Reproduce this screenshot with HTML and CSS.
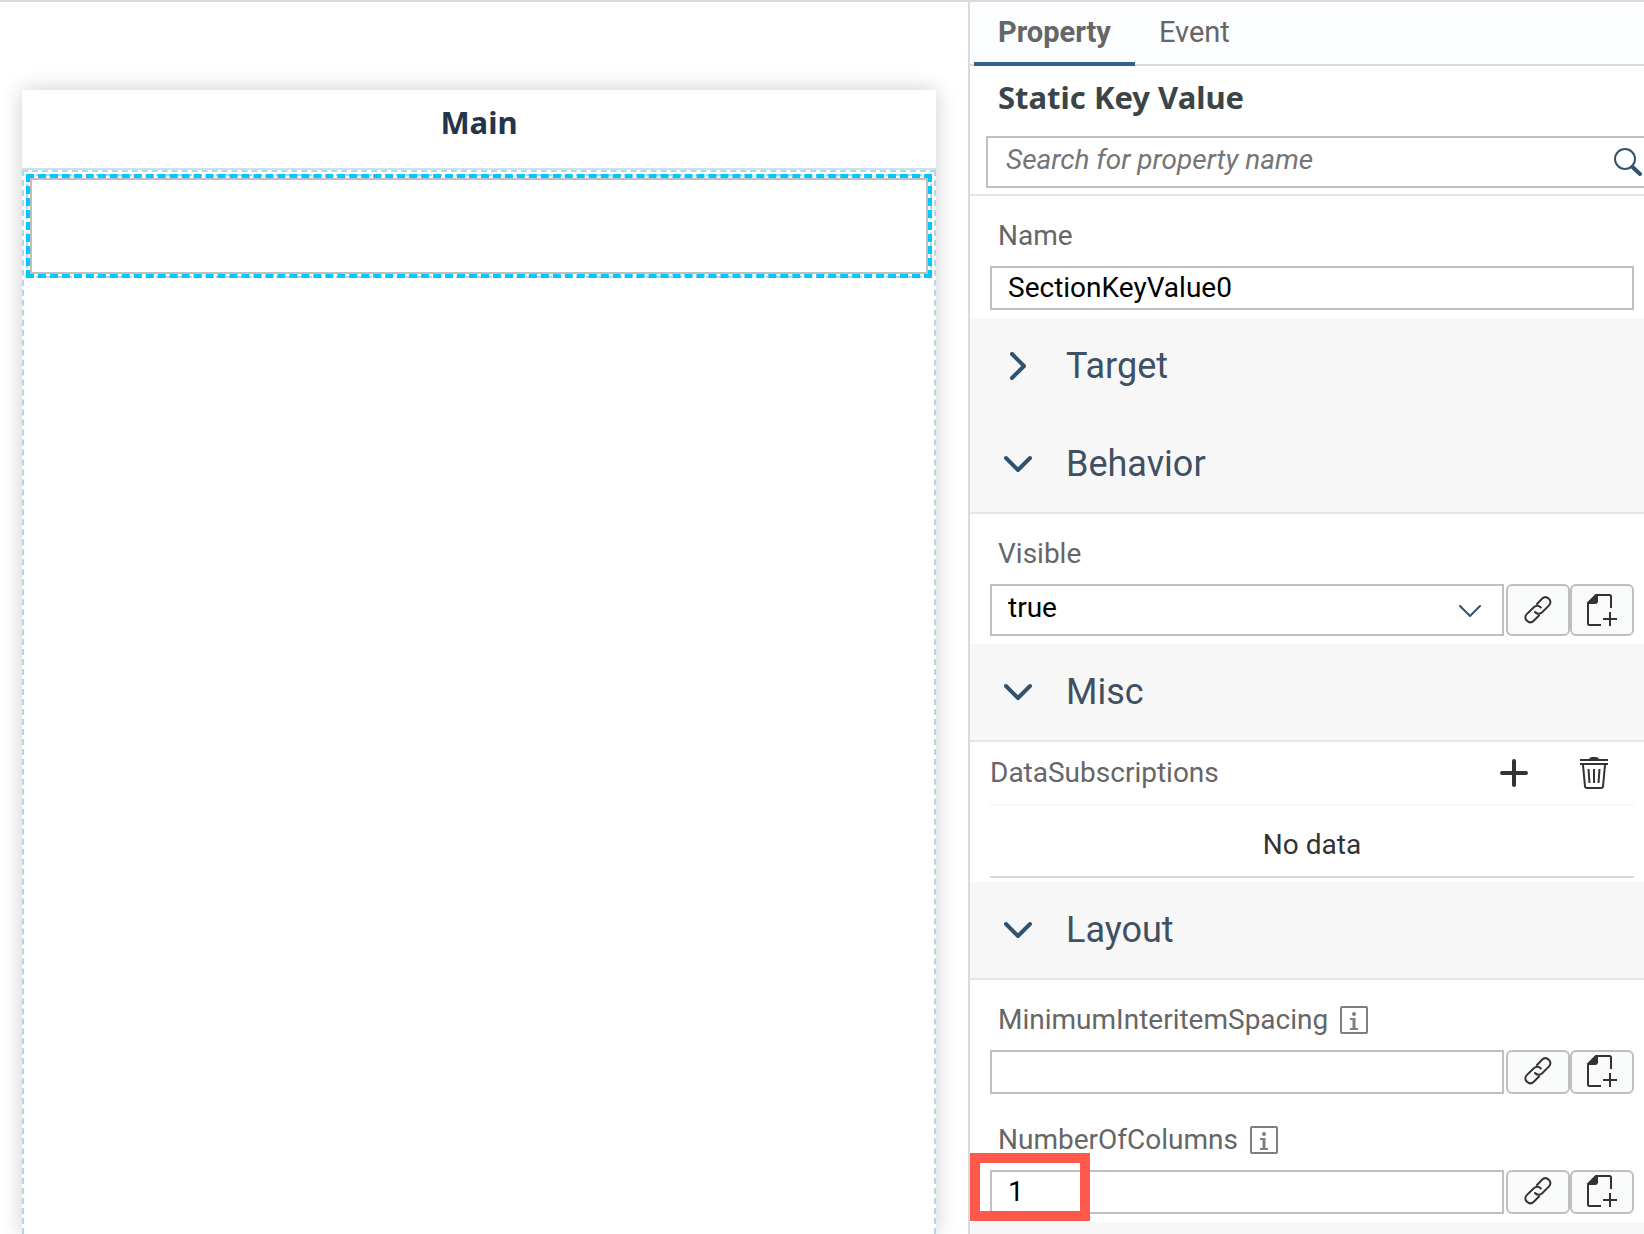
FILE: index.html
```html
<!DOCTYPE html>
<html lang="en">
<head>
<meta charset="utf-8">
<title>Page designer</title>
<link rel="stylesheet" href="styles.css">
</head>
<body>
<svg class="symbols" aria-hidden="true">
  <symbol id="chevron" viewBox="0 0 28 28"><path d="M2 8l12 12L26 8" fill="none" stroke="currentColor" stroke-width="4" stroke-linecap="round" stroke-linejoin="round"/></symbol>
  <symbol id="link" viewBox="0 0 28 28"><g fill="none" stroke="currentColor" stroke-width="2" stroke-linecap="round"><path d="M13 8l5-5.200c2.300-2.300 4.700-2 6.800 0s2.300 4.500 0 6.800l-6.600 6.600c-2.300 2-5.200 1.900-7.200-.2"/><path d="M15 19.500l-5.200 5.200c-2.300 2.300-4.700 2-6.800 0s-2.300-4.500 0-6.800l6.800-6.600c2.200-2 4.900-1.900 7 .2"/></g></symbol>
  <symbol id="new" viewBox="0 0 30 32"><g fill="none" stroke="currentColor" stroke-width="2"><path d="M24 14V2.500Q24 1 22.500 1H9L1 9v20.500Q1 31 2.500 31H14"/><path d="M23 18v14M16 25h14"/></g><path d="M9 0h2v7q0 3-3 3H0V9z" fill="currentColor"/></symbol>
  <symbol id="info" viewBox="0 0 28 28"><rect x="1" y="1" width="26" height="26" rx="1" fill="none" stroke="currentColor" stroke-width="2"/><path d="M10 12h5.500v10H18v2h-8v-2h2.500v-8H10z" fill="currentColor"/><circle cx="14" cy="8" r="2" fill="currentColor"/></symbol>
</svg>
<div class="app">
  <main class="canvas">
    <section class="page">
      <header class="page-header"><h1>Main</h1></header>
      <div class="dropzone">
        <div class="selected"><div class="selected-body"></div></div>
      </div>
    </section>
  </main>
  <aside class="panel">
    <nav class="tabs">
      <a class="tab active" href="#property">Property</a>
      <a class="tab" href="#event">Event</a>
    </nav>
    <div class="intro">
      <h2>Static Key Value</h2>
      <div class="search">
        <input type="search" placeholder="Search for property name" aria-label="Search for property name">
        <button type="button" aria-label="Search"><svg width="28" height="30" viewBox="0 0 28 30"><circle cx="11" cy="12" r="10" fill="none" stroke="currentColor" stroke-width="2"/><path d="M18.500 20l7.500 7" stroke="currentColor" stroke-width="4" stroke-linecap="round"/></svg></button>
      </div>
    </div>
    <div class="group">
      <div class="field">
        <label for="name">Name</label>
        <div class="controls"><input id="name" type="text" value="SectionKeyValue0"></div>
      </div>
    </div>
    <button class="section closed" type="button" aria-expanded="false"><svg class="arrow"><use href="#chevron"/></svg>Target</button>
    <button class="section" type="button" aria-expanded="true"><svg class="arrow"><use href="#chevron"/></svg>Behavior</button>
    <div class="group">
      <div class="field">
        <label for="visible">Visible</label>
        <div class="controls tall">
          <div class="select"><select id="visible"><option>true</option><option>false</option></select><svg width="22" height="12" viewBox="0 0 22 12"><path d="M1 1l10 10L21 1" fill="none" stroke="currentColor" stroke-width="2" stroke-linecap="round" stroke-linejoin="round"/></svg></div>
          <div class="actions">
            <button type="button" aria-label="Bind"><svg class="i-link"><use href="#link"/></svg></button>
            <button type="button" aria-label="Create rule"><svg class="i-new"><use href="#new"/></svg></button>
          </div>
        </div>
      </div>
    </div>
    <button class="section" type="button" aria-expanded="true"><svg class="arrow"><use href="#chevron"/></svg>Misc</button>
    <div class="list">
      <div class="list-head">
        <h3>DataSubscriptions</h3>
        <button type="button" aria-label="Add"><svg width="28" height="28" viewBox="0 0 28 28"><path d="M14 2v24M2 14h24" stroke="currentColor" stroke-width="4" stroke-linecap="round"/></svg></button>
        <button type="button" aria-label="Delete"><svg width="28" height="32" viewBox="0 0 28 32"><path d="M0 3h28M0 7h28" stroke="currentColor" stroke-width="2"/><path d="M9 2Q10 0 12 0h4q2 0 3 2z" fill="currentColor"/><path d="M3 8l2 21.500Q5.200 31 7 31h14q1.800 0 2-1.500L25 8M8.500 12l1 14M14 12v14M19.500 12l-1 14" fill="none" stroke="currentColor" stroke-width="2"/></svg></button>
      </div>
      <p>No data</p>
    </div>
    <button class="section" type="button" aria-expanded="true"><svg class="arrow"><use href="#chevron"/></svg>Layout</button>
    <div class="group">
      <div class="field">
        <label for="spacing">MinimumInteritemSpacing<svg class="info"><use href="#info"/></svg></label>
        <div class="controls">
          <input id="spacing" type="text">
          <div class="actions">
            <button type="button" aria-label="Bind"><svg class="i-link"><use href="#link"/></svg></button>
            <button type="button" aria-label="Create rule"><svg class="i-new"><use href="#new"/></svg></button>
          </div>
        </div>
      </div>
      <div class="field">
        <label for="columns">NumberOfColumns<svg class="info"><use href="#info"/></svg></label>
        <div class="controls">
          <input id="columns" type="text" value="1">
          <div class="actions">
            <button type="button" aria-label="Bind"><svg class="i-link"><use href="#link"/></svg></button>
            <button type="button" aria-label="Create rule"><svg class="i-new"><use href="#new"/></svg></button>
          </div>
          <span class="highlight"></span>
        </div>
      </div>
    </div>
    <div class="rest"></div>
  </aside>
</div>
</body>
</html>
```
FILE: styles.css
```css
* { box-sizing: border-box; }
body {
  margin: 0;
  background: #fff;
  color: #666;
  font: 28px/36px Roboto, "Liberation Sans", sans-serif;
}
h1, h2, h3, p { margin: 0; font: inherit; }
button, input, select { font: inherit; color: inherit; margin: 0; padding: 0; border: 0; border-radius: 0; background: none; }
svg { display: block; flex: none; }
.symbols { position: absolute; width: 0; height: 0; }

.app {
  display: grid;
  grid-template-columns: 968fr 676fr;
  height: 100vh;
  overflow: hidden;
  border-top: 2px solid #d9d9de;
}

/* design canvas */
.canvas { display: flex; padding: 88px 32px 0 22px; overflow: hidden; }
.page { flex: 1; display: flex; flex-direction: column; background: #fff; box-shadow: 0 0 20px rgba(0, 0, 0, .2); }
.page-header { height: 80px; padding-top: 14px; border-bottom: 2px solid #d1dfed; text-align: center; }
.page-header h1 { font: bold 31px/36px "Noto Sans", sans-serif; color: #22354b; }
.dropzone { flex: 1; padding: 2px; border: 2px dashed #add8e6; border-bottom: 0; }
.selected { border: 2px dashed #add8e6; outline: 4px dashed #00c8ff; outline-offset: -4px; padding: 2px; }
.selected-body { height: 96px; border: 2px solid #bfbfbf; }

/* property panel */
.panel { display: flex; flex-direction: column; border-left: 2px solid #d9d9e0; min-width: 0; overflow: hidden; }
.panel > * { flex: none; }
.tabs { display: flex; height: 64px; padding-left: 4px; background: #fcfdfe; border-bottom: 2px solid #d9d9de; }
.tab { height: 64px; padding: 12px 24px 0; color: #666; font-size: 29px; text-decoration: none; }
.tab.active { font-weight: bold; border-bottom: 4px solid #346187; }
.intro { height: 130px; border-bottom: 2px solid #e5e5e5; padding: 12px 0 6px 16px; }
.intro h2 { height: 58px; padding-left: 12px; font: bold 31px/38px "Noto Sans", sans-serif; color: #3b4446; }
.search { display: flex; height: 52px; border: 2px solid #bfbfbf; border-right: 0; }
.search input { flex: 1; min-width: 0; padding: 0 18px 4px; outline: 0; }
.search input::placeholder { color: #757575; font-style: italic; opacity: 1; }
.search button { padding-right: 2px; color: #30536f; }

.group { padding: 0 10px 8px 20px; }
.field label { display: flex; align-items: center; gap: 12px; height: 70px; padding: 10px 0 0 8px; }
.field + .field { padding-top: 6px; }
.info { width: 28px; height: 28px; color: #7f7f7f; }
.controls { position: relative; display: flex; gap: 2px; height: 44px; }
.controls.tall { height: 52px; }
.controls input, .select select { flex: 1; min-width: 0; width: 100%; height: 100%; border: 2px solid #bfbfbf; padding: 0 16px 2px; color: #000; background: #fff; }
.select { position: relative; flex: 1; }
.select select { appearance: none; padding-bottom: 4px; }
.select svg { position: absolute; right: 23px; top: 21px; color: #30536f; }
.actions { display: flex; }
.actions button { display: flex; align-items: center; justify-content: center; width: 64px; padding-bottom: 2px; border: 2px solid #bfbfbf; border-radius: 6px; background: #f9fbfa; color: #333; }
.tall .actions button { padding-bottom: 0; }
.i-link { width: 28px; height: 28px; }
.i-new { width: 30px; height: 32px; }
.highlight { position: absolute; left: -20px; top: -17px; width: 120px; height: 68px; border: 10px solid #ff594c; }

.section { display: flex; align-items: center; gap: 34px; height: 98px; padding-left: 34px; background: #f7f7f7; border-bottom: 2px solid #e5e5e5; color: #3f5063; font-size: 36px; text-align: left; }
.section.closed { border-bottom-color: #f7f7f7; }
.arrow { width: 28px; height: 28px; color: #30536f; }
.closed .arrow { transform: rotate(-90deg); }

.list { margin: 0 10px 4px 20px; border-bottom: 2px solid #d9d9d9; }
.list-head { display: flex; align-items: center; height: 64px; border-bottom: 2px solid #f7f7f7; }
.list-head h3 { flex: 1; }
.list-head button { color: #333; width: 80px; display: flex; justify-content: center; }
.list p { height: 70px; padding-top: 21px; color: #333; text-align: center; }
.rest { height: 96px; background: #f7f7f7; }
```
